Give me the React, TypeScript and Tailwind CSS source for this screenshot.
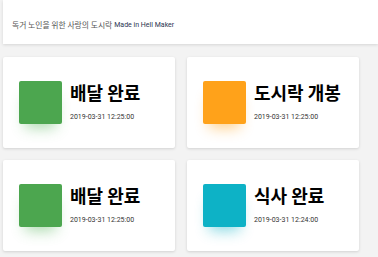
import React from "react";

const items = [
  { title: "배달 완료", date: "2019-03-31 12:25:00", color: "bg-[#4ca64f]", shadow: "shadow-[0_10px_14px_-6px_rgba(76,175,80,0.45)]" },
  { title: "도시락 개봉", date: "2019-03-31 12:25:00", color: "bg-[#ffa21a]", shadow: "shadow-[0_10px_14px_-6px_rgba(255,152,0,0.45)]" },
  { title: "배달 완료", date: "2019-03-31 12:25:00", color: "bg-[#4ca64f]", shadow: "shadow-[0_10px_14px_-6px_rgba(76,175,80,0.45)]" },
  { title: "식사 완료", date: "2019-03-31 12:24:00", color: "bg-[#0db2c6]", shadow: "shadow-[0_10px_14px_-6px_rgba(0,172,193,0.45)]" },
];

export default function App() {
  return (
    <div className="w-[378px] h-[257px] overflow-hidden bg-[#f3f3f3] pl-[3px] font-['Roboto','Noto_Sans_CJK_KR',sans-serif]">
      <div className="h-[44px] bg-white shadow-[0_1px_3px_rgba(0,0,0,0.12)] flex items-center pl-[9px] pt-[6px] text-[7px] text-[#444]">
        <span className="text-[7.8px] text-[#555] font-['Noto_Sans_CJK_KR',sans-serif]">독거 노인을 위한 사랑의 도시락</span>
        <span className="ml-[2px] text-[#2a3550]">Made in Hell Maker</span>
      </div>
      <div className="mt-[13px] grid grid-cols-[172px_172px] gap-x-[12px] gap-y-[12px]">
        {items.map((it, i) => (
          <div key={i} className="h-[91px] bg-white rounded-[2px] shadow-[0_1px_3px_rgba(0,0,0,0.14)] flex items-center pl-[16px]">
            <div className={`w-[43px] h-[43px] rounded-[2px] ${it.color} ${it.shadow}`} />
            <div className="ml-[8px] flex flex-col pb-[3px]">
              <div className="text-[18px] leading-[22px] font-bold text-black font-['Noto_Sans_CJK_KR',sans-serif]">{it.title}</div>
              <div className="mt-[10px] text-[7px] leading-[9px] text-[#333]">{it.date}</div>
            </div>
          </div>
        ))}
      </div>
    </div>
  );
}
